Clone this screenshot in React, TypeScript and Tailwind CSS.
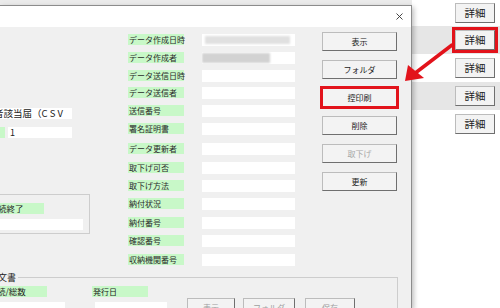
import React from 'react';

const upperLabels = ['データ作成日時', 'データ作成者', 'データ送信日時', 'データ送信者', '送信番号', '署名証明書'];
const lowerLabels = ['データ更新者', '取下げ可否', '取下げ方法', '納付状況', '納付番号', '確認番号', '収納機関番号'];

const actions = [
  { label: '表示' },
  { label: 'フォルダ' },
  { label: '控印刷', marked: true },
  { label: '削除' },
  { label: '取下げ', disabled: true },
  { label: '更新' },
];

const btn =
  'bg-[#f3f3f3] border border-[#bcbcbc] border-r-[#6f6f6f] border-b-[#6f6f6f] flex items-center justify-center text-[8px] leading-none';

const FieldRow: React.FC<{ label: string; height: string; blur?: 'light' | 'dark' }> = ({ label, height, blur }) => (
  <div className={`flex items-start ${height}`}>
    <div className="w-[56px] h-[11px] bg-[#c8f8c8] pl-[1px] text-[8px] leading-[11px] text-[#2a2a2a] whitespace-nowrap">
      {label}
    </div>
    <div className="ml-[18px] w-[93px] h-[12px] bg-white overflow-hidden flex items-center">
      {blur === 'light' && <div className="ml-[3px] w-[85px] h-[8px] bg-[#e0e0e0] blur-[1px]" />}
      {blur === 'dark' && <div className="w-[68px] h-[10px] bg-[#d2d2d2] blur-[1px]" />}
    </div>
  </div>
);

export default function App() {
  return (
    <div className="relative w-[500px] h-[308px] overflow-hidden bg-white flex font-['Noto_Sans_CJK_JP',sans-serif] text-[#222]">
      {/* dialog */}
      <div className="relative z-10 w-[412px] shrink-0 flex flex-col">
        <div className="h-[5px] shrink-0 bg-[#ebebeb]" />
        <div className="flex-1 min-h-0 flex flex-col border-t border-r border-[#8c8c8c] shadow-[2px_2px_5px_rgba(0,0,0,0.25)] overflow-hidden">
          <div className="h-[21px] shrink-0 bg-white flex items-center justify-end pr-[8px]">
            <svg width="7" height="7" viewBox="0 0 7 7">
              <path d="M0.5 0.5 L6.5 6.5 M6.5 0.5 L0.5 6.5" stroke="#333" strokeWidth="0.9" />
            </svg>
          </div>
          <div className="flex-1 min-h-0 overflow-hidden bg-[#f0f0f0] flex flex-col">
            {/* upper area */}
            <div className="h-[245px] flex shrink-0">
              {/* left (cut) column */}
              <div className="w-[95px] shrink-0 pt-[81px] flex flex-col">
                <div className="w-[72px] h-[11px] bg-white overflow-hidden text-[9.5px] leading-[11px] whitespace-nowrap">
                  <span className="-ml-[6px] inline-block">者該当届（C S V</span>
                </div>
                <div className="mt-[8px] flex h-[11px]">
                  <div className="w-[5px] bg-[#c8f8c8]" />
                  <div className="ml-[3px] w-[64px] bg-white pl-[2px] text-[9px] leading-[11px]">1</div>
                </div>
                <div className="mt-[56px] w-[90px] h-[40px] border-t border-r border-b border-[#cdcdcd] pt-[8px] flex flex-col">
                  <div className="w-[44px] h-[11px] bg-[#c8f8c8] overflow-hidden text-[8.5px] leading-[11px] whitespace-nowrap">
                    <span className="-ml-[2px] inline-block">続終了</span>
                  </div>
                  <div className="mt-[5px] w-[83px] h-[11px] bg-white" />
                </div>
              </div>

              {/* label / value column */}
              <div className="ml-[33px] pt-[7px] flex flex-col">
                {upperLabels.map((l, i) => (
                  <FieldRow key={l} label={l} height="h-[18.6px]" blur={i === 0 ? 'light' : i === 1 ? 'dark' : undefined} />
                ))}
                <div className="mt-[2.4px] flex flex-col">
                  {lowerLabels.map((l) => (
                    <FieldRow key={l} label={l} height="h-[18.4px]" />
                  ))}
                </div>
              </div>

              {/* action buttons */}
              <div className="ml-[27px] pt-[5px] w-[75px] flex flex-col gap-[9px]">
                {actions.map((a) => (
                  <div
                    key={a.label}
                    className={`h-[19px] ${btn} ${a.disabled ? 'text-[#a8a8a8]' : 'text-[#222]'} ${
                      a.marked ? 'outline-3 outline-[#e2131b] -outline-offset-1' : ''
                    }`}
                  >
                    {a.label}
                  </div>
                ))}
              </div>
            </div>

            {/* 文書 group */}
            <fieldset className="shrink-0 -ml-[30px] w-[428px] border border-[#cdcdcd]">
              <legend className="ml-[25px] px-[2px] text-[9px] leading-[11px] text-[#222]">文書</legend>
              <div className="pl-[29px] pt-[3px] flex items-start">
                <div className="flex flex-col">
                  <div className="w-[47px] h-[11px] bg-[#c8f8c8] overflow-hidden text-[8.5px] leading-[11px] whitespace-nowrap">
                    <span className="-ml-[3px] inline-block">続/総数</span>
                  </div>
                  <div className="mt-[5px] w-[65px] h-[12px] bg-white" />
                </div>
                <div className="ml-[27px] flex flex-col">
                  <div className="w-[56px] h-[11px] bg-[#c8f8c8] pl-[1px] text-[8px] leading-[11px]">発行日</div>
                  <div className="mt-[5px] ml-[3px] w-[72px] h-[12px] bg-white" />
                </div>
                <div className="ml-[20px] mt-[12px] flex">
                  <div className={`w-[48px] h-[20px] ${btn} text-[#a0a0a0]`}>表示</div>
                  <div className={`ml-[8px] w-[52px] h-[20px] ${btn} text-[#a0a0a0]`}>フォルダ</div>
                  <div className={`ml-[10px] w-[50px] h-[20px] ${btn} text-[#a0a0a0]`}>保存</div>
                </div>
              </div>
            </fieldset>
          </div>
        </div>
      </div>

      {/* list behind the dialog */}
      <div className="flex-1 flex flex-col">
        {[0, 1, 2, 3, 4].map((i) => (
          <div
            key={i}
            className={`${i === 0 ? 'h-[26px]' : 'h-[28px]'} flex items-center justify-end pr-[5px] ${
              i % 2 === 1 ? 'bg-[#e6e6e6]' : 'bg-white'
            }`}
          >
            <div
              className={`w-[40px] h-[20px] ${btn} text-[10.5px] text-[#222] ${
                i === 1 ? 'outline-3 outline-[#e2131b]' : ''
              }`}
            >
              詳細
            </div>
          </div>
        ))}
      </div>

      {/* annotation arrow */}
      <svg className="absolute inset-0 z-20 pointer-events-none" width="500" height="308" viewBox="0 0 500 308">
        <line x1="452" y1="45" x2="414" y2="74" stroke="#e2131b" strokeWidth="3.5" strokeLinecap="round" />
        <polygon points="405,81 408,65 424,78" fill="#e2131b" />
      </svg>
    </div>
  );
}
